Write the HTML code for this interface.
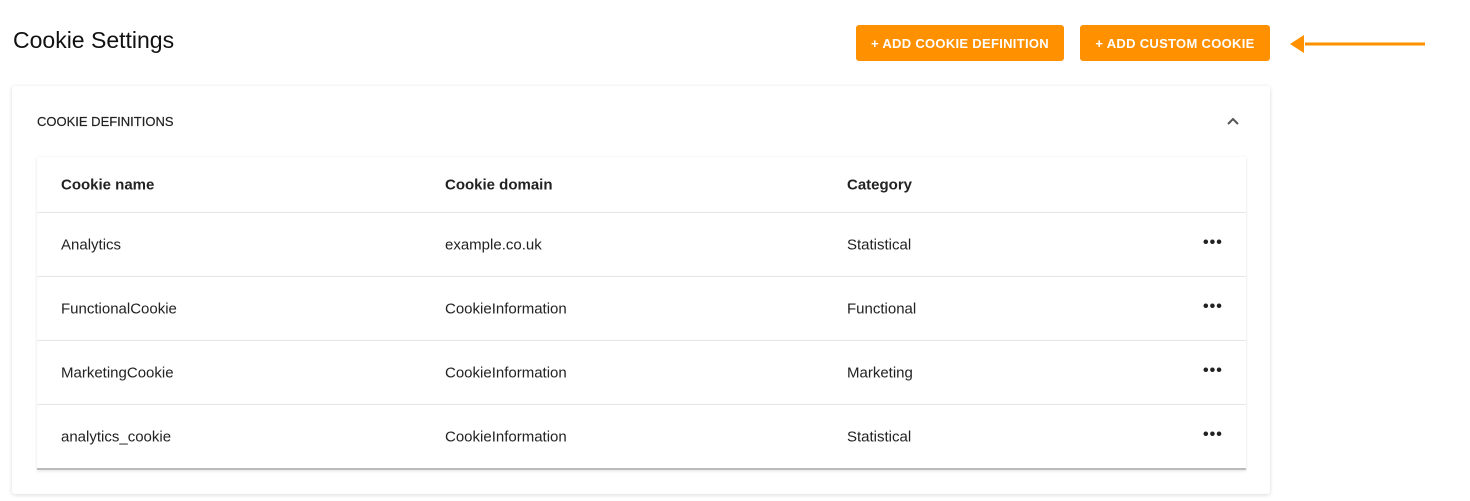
<!DOCTYPE html>
<html><head><style>
*{box-sizing:border-box;margin:0;padding:0}
body{width:1470px;height:501px;background:#fff;font-family:"Liberation Sans",Arial,sans-serif;color:#222;position:relative;overflow:hidden}
h1{position:absolute;left:13px;top:27px;font-size:23px;font-weight:400;color:#111}
.btn{position:absolute;top:25px;height:36px;background:#ff9100;color:#fff;border-radius:3px;font-size:13px;font-weight:700;letter-spacing:.3px;display:flex;align-items:center;justify-content:center}
.card{position:absolute;left:12px;top:86px;width:1258px;height:408px;background:#fff;box-shadow:0 1px 4px rgba(0,0,0,.15);border-radius:3px}
.ttl{position:absolute;left:25px;top:28px;font-size:13px;color:#222;-webkit-text-stroke:.2px #222}
.tbl{position:absolute;left:25px;top:71px;width:1209px;height:313px;box-shadow:0 1px 3px rgba(0,0,0,.12);border-bottom:2px solid #bbb}
.row{position:absolute;left:0;width:100%;border-bottom:1px solid #e6e6e6;font-size:15px}
.row span{position:absolute;top:50%;transform:translateY(-50%)}
.c1{left:24px}.c2{left:408px}.c3{left:810px}
.dots{left:1166px;font-weight:700;letter-spacing:1px;font-size:16px}
</style></head><body>
<h1>Cookie Settings</h1>
<div class="btn" style="left:856px;width:208px">+ ADD COOKIE DEFINITION</div>
<div class="btn" style="left:1080px;width:190px">+ ADD CUSTOM COOKIE</div>
<svg style="position:absolute;left:1285px;top:30px" width="145" height="28"><path d="M20 14 H140" stroke="#ff9100" stroke-width="3"/><path d="M5 14 L19 5 L19 23 Z" fill="#ff9100"/></svg>
<div class="card">
<div class="ttl">COOKIE DEFINITIONS</div>
<svg style="position:absolute;left:1214px;top:30px" width="14" height="10"><path d="M2 8 L7 3 L12 8" stroke="#555" stroke-width="2" fill="none"/></svg>
<div class="tbl">
<div class="row" style="top:0;height:56px;font-weight:700"><span class="c1">Cookie name</span><span class="c2">Cookie domain</span><span class="c3">Category</span></div>
<div class="row" style="top:56px;height:64px"><span class="c1">Analytics</span><span class="c2">example.co.uk</span><span class="c3">Statistical</span><span class="dots" style="top:47%">•••</span></div>
<div class="row" style="top:120px;height:64px"><span class="c1">FunctionalCookie</span><span class="c2">CookieInformation</span><span class="c3">Functional</span><span class="dots" style="top:47%">•••</span></div>
<div class="row" style="top:184px;height:64px"><span class="c1">MarketingCookie</span><span class="c2">CookieInformation</span><span class="c3">Marketing</span><span class="dots" style="top:47%">•••</span></div>
<div class="row" style="top:248px;height:64px;border-bottom:none"><span class="c1">analytics_cookie</span><span class="c2">CookieInformation</span><span class="c3">Statistical</span><span class="dots" style="top:47%">•••</span></div>
</div></div>
</body></html>
